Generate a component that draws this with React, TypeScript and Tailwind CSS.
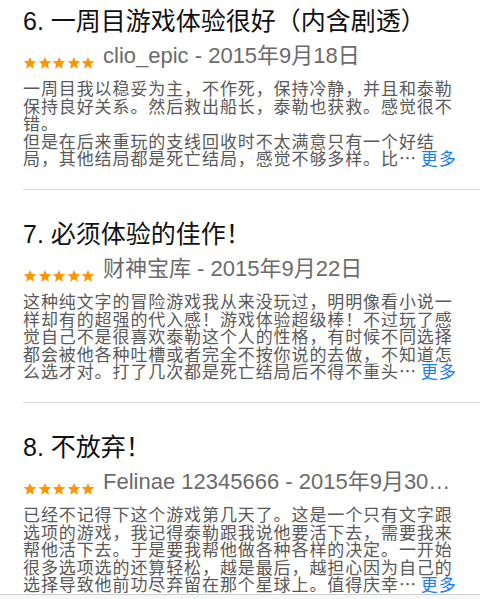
const reviews = [
  {
    title: "6. 一周目游戏体验很好（内含剧透）",
    meta: "clio_epic - 2015年9月18日",
    body: [
      "一周目我以稳妥为主，不作死，保持冷静，并且和泰勒保持良好关系。然后救出船长，泰勒也获救。感觉很不错。",
      "但是在后来重玩的支线回收时不太满意只有一个好结局，其他结局都是死亡结局，感觉不够多样。比…",
    ],
  },
  {
    title: "7. 必须体验的佳作！",
    meta: "财神宝库 - 2015年9月22日",
    body: [
      "这种纯文字的冒险游戏我从来没玩过，明明像看小说一样却有的超强的代入感！游戏体验超级棒！不过玩了感觉自己不是很喜欢泰勒这个人的性格，有时候不同选择都会被他各种吐槽或者完全不按你说的去做，不知道怎么选才对。打了几次都是死亡结局后不得不重头…",
    ],
  },
  {
    title: "8. 不放弃！",
    meta: "Felinae 12345666 - 2015年9月30…",
    body: [
      "已经不记得下这个游戏第几天了。这是一个只有文字跟选项的游戏，我记得泰勒跟我说他要活下去，需要我来帮他活下去。于是要我帮他做各种各样的决定。一开始很多选项选的还算轻松，越是最后，越担心因为自己的选择导致他前功尽弃留在那个星球上。值得庆幸…",
    ],
  },
];

function Star() {
  return (
    <svg viewBox="0 0 24 24" className="w-[14px] h-[14px] shrink-0" fill="#ff9500">
      <path d="M12 1.5l3.1 7.1 7.6.6-5.8 5 1.8 7.5L12 17.7l-6.7 4 1.8-7.5-5.8-5 7.6-.6z" />
    </svg>
  );
}

function Review({ r, first }: { r: (typeof reviews)[number]; first: boolean }) {
  return (
    <div
      className={`${first ? "pt-[6px]" : "pt-[29px]"} pb-[22px] border-b border-[#d8d8d8]`}
    >
      <div className="text-[25px] leading-[30px] text-[#111]">{r.title}</div>
      <div className="mt-[7px] flex items-end h-[26px] w-[434px]">
        <div className="flex gap-[0.5px] mb-[-1px]">
          <Star />
          <Star />
          <Star />
          <Star />
          <Star />
        </div>
        <div className="ml-[8px] text-[22px] leading-[26px] text-[#6b6b6b] whitespace-nowrap truncate">
          {r.meta}
        </div>
      </div>
      <div
        className="mt-[10px] w-[434px] text-[17px] tracking-[0.9px] leading-[17.6px] text-[#595959]"
        style={{ fontFamily: '"Noto Sans CJK SC", sans-serif' }}
      >
        {r.body.map((p, i) => (
          <div key={i}>
            {p}
            {i === r.body.length - 1 && (
              <span className="ml-[4px] text-[#1a7cf3]">更多</span>
            )}
          </div>
        ))}
      </div>
    </div>
  );
}

export default function App() {
  return (
    <div
      className="bg-white min-h-screen pl-[23px] overflow-hidden"
      style={{ fontFamily: '"Liberation Sans", "Noto Sans CJK SC", sans-serif' }}
    >
      {reviews.map((r, i) => (
        <Review key={i} r={r} first={i === 0} />
      ))}
      <div className="fixed left-0 right-0 bottom-0 h-[5px] bg-[#f8f8f8] border-t border-[#cfcfcf]" />
    </div>
  );
}
